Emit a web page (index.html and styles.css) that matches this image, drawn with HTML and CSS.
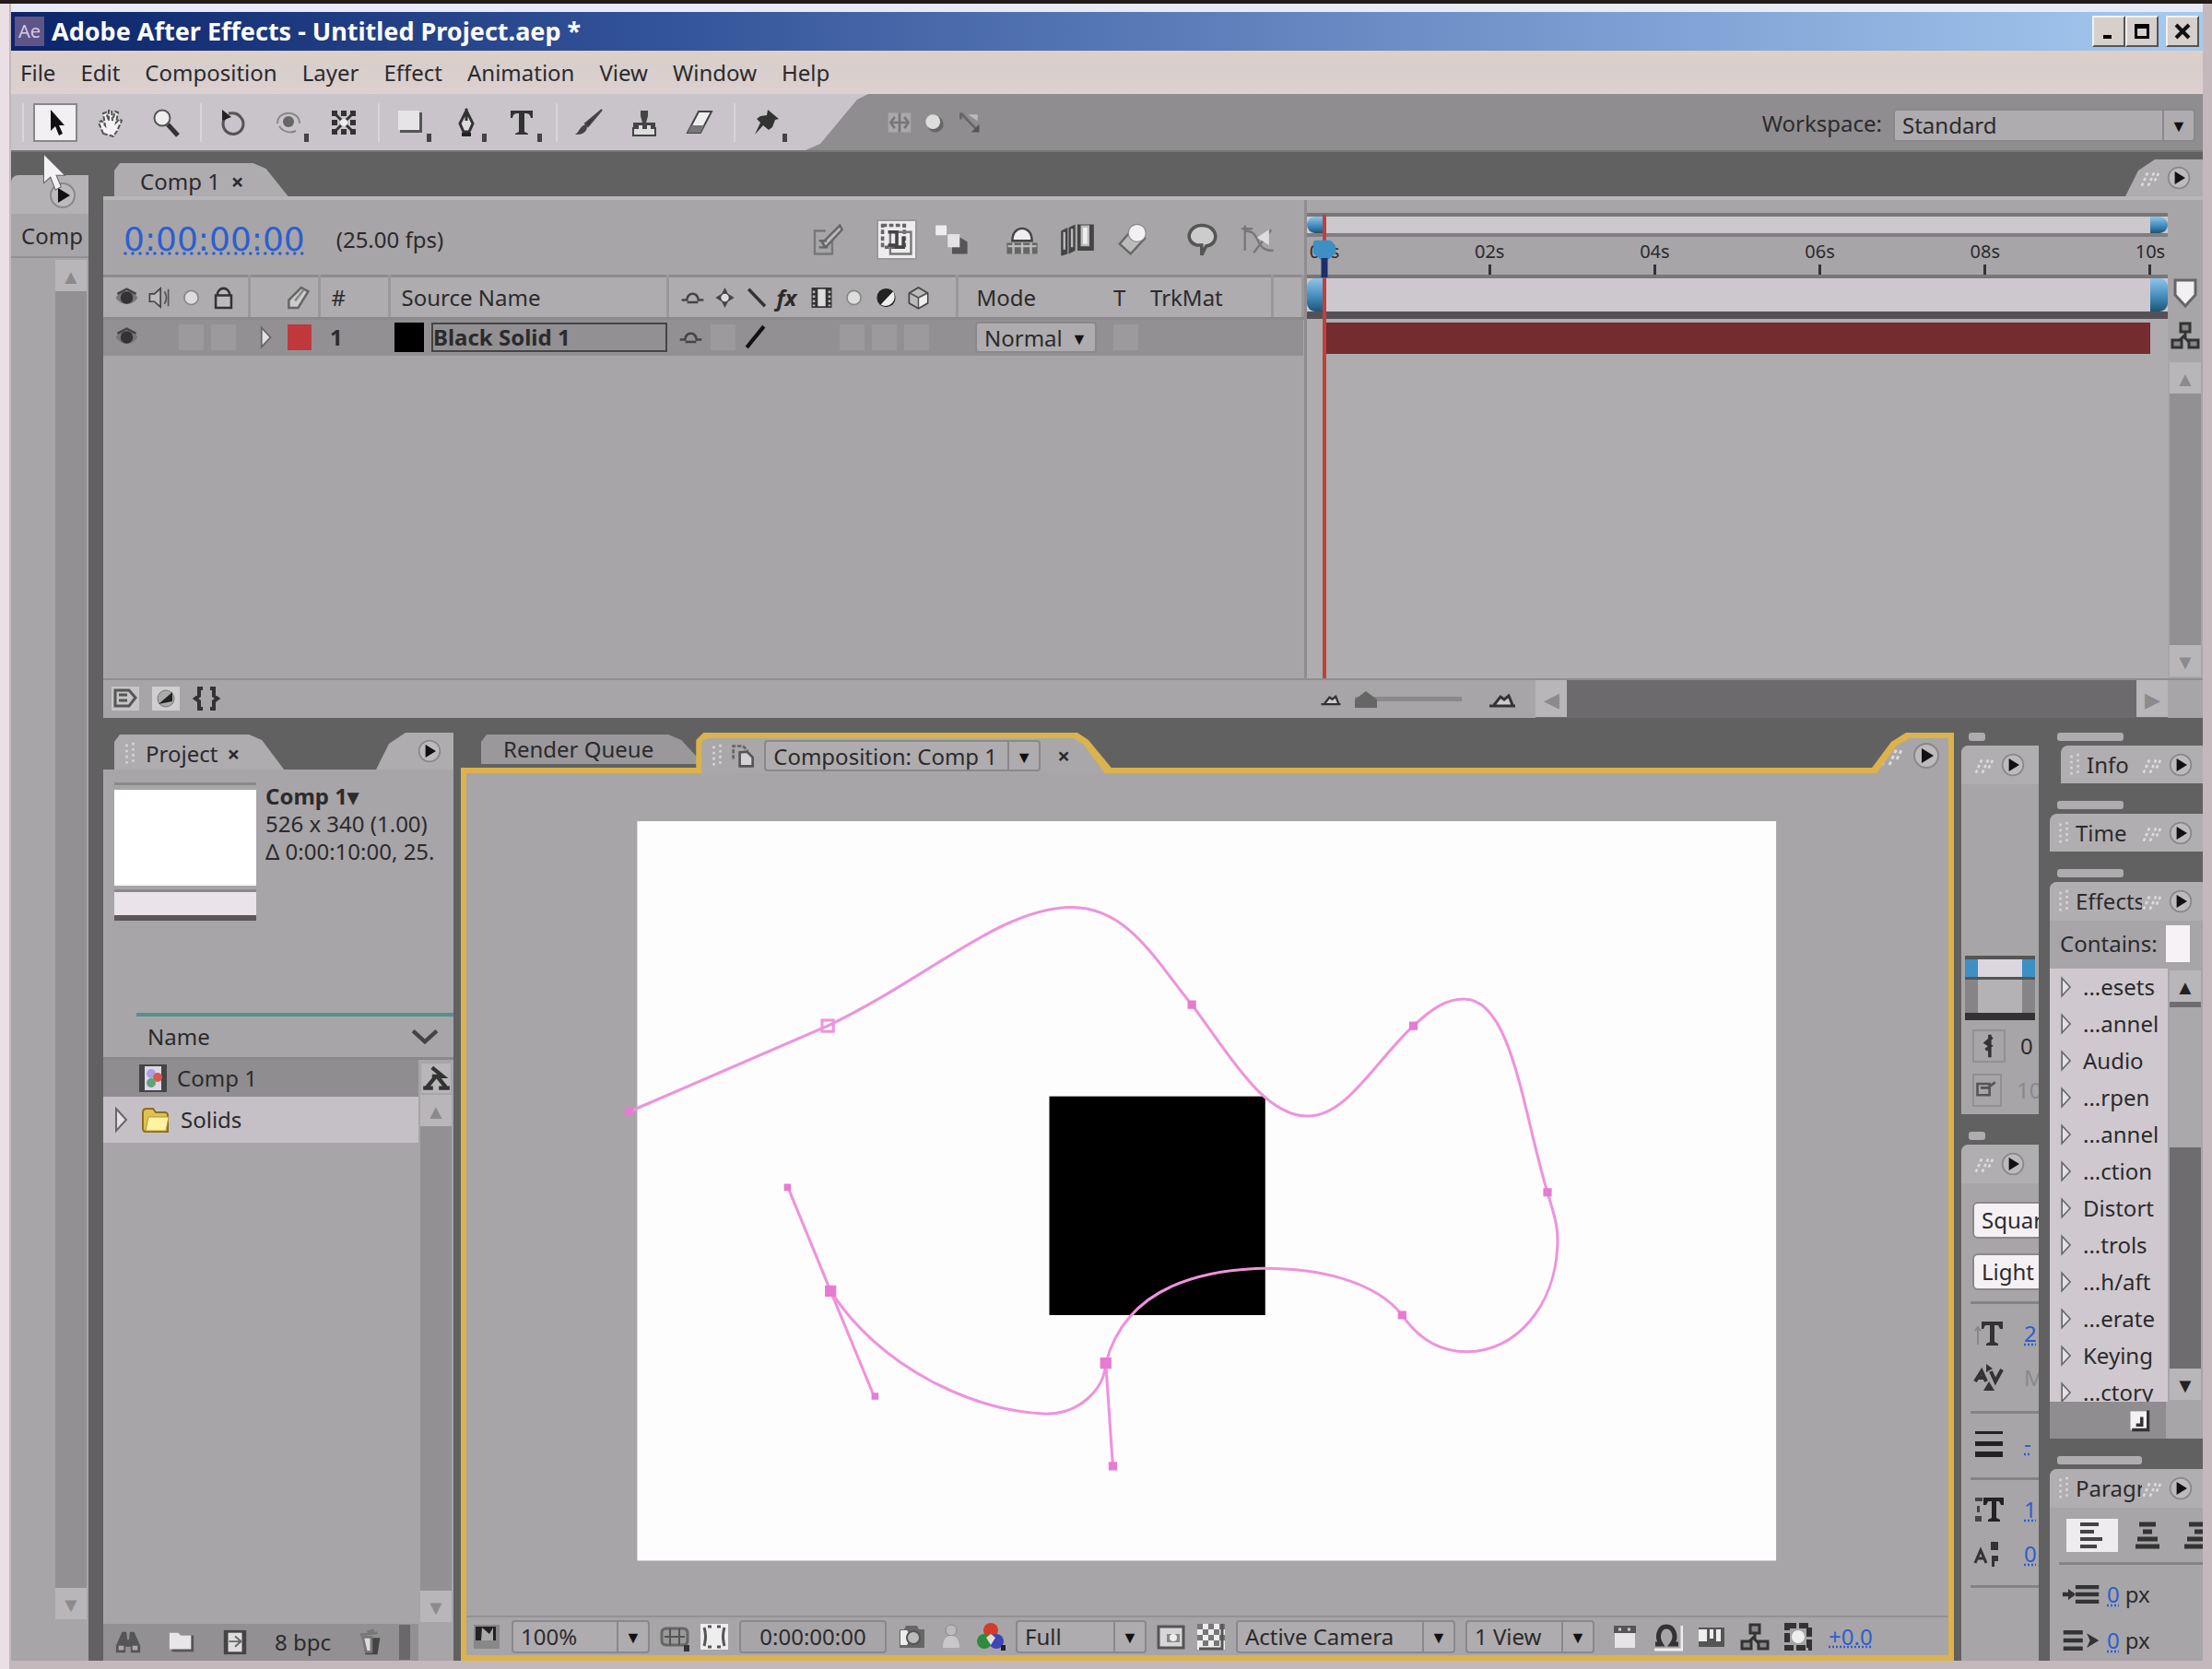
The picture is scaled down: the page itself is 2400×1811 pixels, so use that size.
FILE: index.html
```
<!DOCTYPE html>
<html lang="en">
<head>
  <meta charset="UTF-8">
  <meta name="viewport" content="width=device-width, initial-scale=1.0">
  <title>Adobe After Effects - Untitled Project.aep *</title>
  <link rel="stylesheet" href="styles.css">
</head>
<body>
  <!-- shared icons -->
  <svg class="sprite" aria-hidden="true">
    <symbol id="i-arrow" viewBox="0 0 32 32"><path d="M11 2v23l5-5 4 10 4-2-4-9h6z" fill="#111"/></symbol>
    <symbol id="i-hand" viewBox="0 0 32 32"><path d="M8 28 3 16l3-2 4 5L8 6l3-1 3 9V3h3l1 11 3-10 3 1-2 11 4-4 2 2-5 11-4 6z" fill="#f4f2f4" stroke="#555" stroke-width="2" stroke-dasharray="5 2"/></symbol>
    <symbol id="i-zoom" viewBox="0 0 32 32"><path d="m18 18 11 12" stroke="#333" stroke-width="5"/><circle cx="12" cy="11" r="8.500" fill="#eee" stroke="#555" stroke-width="2"/></symbol>
    <symbol id="i-rotate" viewBox="0 0 32 32"><path d="M8 10a11 11 0 1 0 16 0c-3-4-7-5-13-4" fill="none" stroke="#555" stroke-width="3"/><path d="M4 2v12l10-4z" fill="#222"/></symbol>
    <symbol id="i-orbit" viewBox="0 0 32 32"><circle cx="16" cy="15" r="6" fill="#666"/><path d="M4 17C4 2 28 2 28 17M6 20c4 6 12 8 18 5" fill="none" stroke="#888" stroke-width="2"/></symbol>
    <symbol id="i-pan" viewBox="0 0 32 32"><path d="M3 3h6v6H3zM13 3h6v6h-6zM23 3h6v6h-6zM3 13h6v6H3zM23 13h6v6h-6zM3 23h6v6H3zM13 23h6v6h-6zM23 23h6v6h-6z" fill="#333"/><path d="m6 6 20 20M26 6 6 26" stroke="#333" stroke-width="3"/><circle cx="16" cy="16" r="4" fill="#eee"/></symbol>
    <symbol id="i-rect" viewBox="0 0 32 32"><path d="M4 5h24v22H4z" fill="#555"/><path d="M2 3h23v21H2z" fill="#e6e4e6"/></symbol>
    <symbol id="i-pen" viewBox="0 0 32 32"><path d="M16 1v13M16 3l7 14-4 9h-6l-4-9z" fill="#ddd" stroke="#333" stroke-width="3"/><path d="M11 27h10v4H11z" fill="#222"/></symbol>
    <symbol id="i-type" viewBox="0 0 32 32"><path d="M4 3h24v8h-2c-1-4-2-5-7-5v20l4 2v1H9v-1l4-2V6c-5 0-6 1-7 5H4z" fill="#333"/></symbol>
    <symbol id="i-brush" viewBox="0 0 32 32"><path d="M30 2 15 20l-3-3z" fill="#333" stroke="#444" stroke-width="2"/><path d="M13 18c3 4-1 12-12 11 5-3 5-10 12-11z" fill="#444"/></symbol>
    <symbol id="i-stamp" viewBox="0 0 32 32"><path d="M12 3h8v6l-2 7h10v7H4v-7h10l-2-7z" fill="#444"/><path d="M4 22h24v8H4z" fill="#ddd" stroke="#444" stroke-width="2"/><path d="M10 19h4v5h-4zM19 19h4v5h-4z" fill="#ddd"/></symbol>
    <symbol id="i-eraser" viewBox="0 0 32 32"><path d="M15 4h14l-12 23H3z" fill="#eee" stroke="#444" stroke-width="2"/><path d="M7 19h14l-4 8H3z" fill="#777"/></symbol>
    <symbol id="i-pin" viewBox="0 0 32 32"><path d="m17 2 12 10-4 1-3 8-4 3-6-5-9 10 6-13-4-4 4-3 7-1z" fill="#333"/></symbol>
    <symbol id="i-axis" viewBox="0 0 32 32"><path d="M2 4h28v24H2z" fill="#aaa8aa"/><path d="M16 4v24M4 16h24M10 9l-5 7 5 7M22 9l5 7-5 7" fill="none" stroke="#777" stroke-width="3"/></symbol>
    <symbol id="i-ball" viewBox="0 0 32 32"><circle cx="17" cy="18" r="10" fill="#666"/><circle cx="14" cy="15" r="9" fill="#ddd"/></symbol>
    <symbol id="i-view" viewBox="0 0 32 32"><path d="M5 4v8M5 4l20 21" stroke="#666" stroke-width="3"/><path d="M14 6h12v8z" fill="#bbb"/><path d="M28 28V18L18 28z" fill="#555"/></symbol>
    <symbol id="i-eye" viewBox="0 0 32 32"><path d="M2 16C8 5 24 5 30 16 24 27 8 27 2 16z" fill="#777"/><circle cx="16" cy="16" r="8" fill="#333"/><path d="M4 11 16 5l12 6" fill="none" stroke="#444" stroke-width="3"/></symbol>
    <symbol id="i-sound" viewBox="0 0 32 32"><path d="M4 11h6l8-7v24l-8-7H4z" fill="#bbb" stroke="#444" stroke-width="2"/><path d="M23 8q5 8 0 16M28 5v22" fill="none" stroke="#555" stroke-width="2"/></symbol>
    <symbol id="i-dot" viewBox="0 0 32 32"><circle cx="16" cy="16" r="9" fill="#ddd" stroke="#888" stroke-width="2"/></symbol>
    <symbol id="i-lock" viewBox="0 0 32 32"><path d="M8 13C8 1 24 1 24 13M6 13h20v16H6z" fill="#bbb" stroke="#333" stroke-width="3"/></symbol>
    <symbol id="i-tag" viewBox="0 0 32 32"><path d="m20 3 9 5-13 21H4V19z" fill="#ccc" stroke="#666" stroke-width="3"/><path d="m12 20 11-14" stroke="#888" stroke-width="3"/></symbol>
    <symbol id="i-shy" viewBox="0 0 32 32"><path d="M2 19h8M22 19h8M9 18a7 7 0 0 1 14 0M9 22h14" fill="none" stroke="#444" stroke-width="3"/></symbol>
    <symbol id="i-sun" viewBox="0 0 32 32"><path d="m16 3 4 8 8 5-8 5-4 8-4-8-8-5 8-5z" fill="#444"/><circle cx="16" cy="16" r="5" fill="#ddd"/></symbol>
    <symbol id="i-back" viewBox="0 0 32 32"><path d="m5 5 21 22" stroke="#333" stroke-width="4"/></symbol>
    <symbol id="i-slash" viewBox="0 0 32 32"><path d="M27 2 5 29" stroke="#111" stroke-width="5"/></symbol>
    <symbol id="i-film" viewBox="0 0 32 32"><path d="M3 3h26v26H3z" fill="#333"/><path d="M11 5h10v22H11z" fill="#ddd"/><path d="M6 7v20M26 7v20" stroke="#bbb" stroke-width="3" stroke-dasharray="3 3"/></symbol>
    <symbol id="i-half" viewBox="0 0 32 32"><circle cx="16" cy="16" r="12" fill="#222"/><path d="M25 8A12 12 0 0 1 9 25z" fill="#eee"/></symbol>
    <symbol id="i-cube" viewBox="0 0 32 32"><path d="m16 3 12 7v13l-12 7-12-7V10z" fill="#bbb" stroke="#444" stroke-width="2"/><path d="m5 10 11 6 11-6M16 16v13" fill="none" stroke="#555" stroke-width="2"/><path d="m17 17 10-5v10l-10 6z" fill="#eee"/></symbol>
    <symbol id="i-draft" viewBox="0 0 32 32"><path d="M15 8H5v21h16V16" fill="none" stroke="#777" stroke-width="2"/><path d="M9 17h7M9 23h8M12 19 28 3l2 4-15 16z" fill="#bbb" stroke="#666" stroke-width="2"/></symbol>
    <symbol id="i-live" viewBox="0 0 32 32"><path d="M3 3h20v20H3z" fill="none" stroke="#666" stroke-width="3" stroke-dasharray="4 2"/><path d="M10 9h19v20H10z" fill="none" stroke="#777" stroke-width="2"/><path d="M8 9h8v12H8M22 13v10h-8" fill="none" stroke="#444" stroke-width="3"/></symbol>
    <symbol id="i-cubes" viewBox="0 0 32 32"><path d="M1 3h10v9H1z" fill="#eee"/><path d="m20 12 10 6v11H16V17z" fill="#555"/><path d="M12 11h11v12H12z" fill="#e4e2e4"/></symbol>
    <symbol id="i-shyhat" viewBox="0 0 32 32"><path d="M2 19h28v10H2z" fill="#666"/><path d="M7 17C7 2 25 2 25 17z" fill="#eee" stroke="#444" stroke-width="2"/><path d="M3 22h26M8 19v10M16 19v10M24 19v10" stroke="#bbb" stroke-width="2"/></symbol>
    <symbol id="i-frames" viewBox="0 0 32 32"><path d="M1 8l6-3v24l-6 2zM8 5l6-3v24l-6 3zM16 2h15v24H16z" fill="#444"/><path d="M20 4h6v17h-6zM4 9v16M11 6v17" fill="#eee" stroke="#bbb" stroke-width="2"/></symbol>
    <symbol id="i-blend" viewBox="0 0 32 32"><path d="m4 20 13-15 10 10-13 14z" fill="#bbb" stroke="#666" stroke-width="2"/><circle cx="20" cy="10" r="8" fill="#f2f0f2" stroke="#888"/></symbol>
    <symbol id="i-brain" viewBox="0 0 32 32"><path d="M10 21C-1 17 3 3 15 3c15 0 17 17 4 19l-4 8v-9z" fill="#ccc" stroke="#555" stroke-width="3"/></symbol>
    <symbol id="i-graph" viewBox="0 0 32 32"><path d="M4 3v23M1 6h10M4 8c16 0 7 18 26 18M28 7 12 28" fill="none" stroke="#777" stroke-width="2"/><path d="m15 14 11-7v14z" fill="#ddd"/></symbol>
    <symbol id="i-toggle" viewBox="0 0 32 32"><path d="M1 3h30v26H1z" fill="#c6c4c6"/><path d="M5 7h15l7 8-7 9H5zM9 12h9M9 18h9" fill="none" stroke="#555" stroke-width="3"/></symbol>
    <symbol id="i-modes" viewBox="0 0 32 32"><path d="M1 3h30v26H1z" fill="#d0ced0"/><circle cx="16" cy="16" r="9" fill="#aaa" stroke="#777"/><path d="m8 22 15-13v10z" fill="#222"/></symbol>
    <symbol id="i-braces" viewBox="0 0 32 32"><path d="M12 5H8v8l-4 3 4 3v8h4M20 5h4v8l4 3-4 3v8h-4" fill="none" stroke="#333" stroke-width="4"/></symbol>
    <symbol id="i-hill" viewBox="0 0 32 32"><path d="M2 24h28M7 23l7-9 4 3 5-4 4 10" fill="#ccc" stroke="#333" stroke-width="3"/></symbol>
    <symbol id="i-flow" viewBox="0 0 32 32"><path d="M16 13v5M6 25l8-8 8 8" stroke="#333" stroke-width="3" fill="none"/><path d="M11 3h10v9H11zM2 21h10v8H2zM20 21h10v8H20z" fill="#888" stroke="#333" stroke-width="3"/></symbol>
    <symbol id="i-flow-alt" viewBox="0 0 32 32"><path d="M1 1h30v30H1z" fill="#b8b6b8"/><path d="M12 14h11L12 5M16 14 6 26M18 15l8 10M3 26h10M19 26h11" stroke="#333" stroke-width="4" fill="none"/></symbol>
    <symbol id="i-folder" viewBox="0 0 32 32"><path d="M2 8q0-4 4-4h7l3 4h10q3 0 3 4v17H5q-3 0-3-4z" fill="#e0c050" stroke="#8a6f22" stroke-width="2"/><path d="M8 13h22l-3 15H5z" fill="#fff2a0" stroke="#b59535"/></symbol>
    <symbol id="i-comp" viewBox="0 0 32 32"><path d="M1 1h30v30H1z" fill="#444"/><path d="M7 3h18v26H7z" fill="#ddd8e8"/><circle cx="14" cy="11" r="5" fill="#a9a0e0"/><circle cx="21" cy="15" r="5" fill="#d8594e"/><circle cx="14" cy="21" r="5" fill="#5fa37b"/></symbol>
    <symbol id="i-find" viewBox="0 0 32 32"><path d="M9 4h5l1 9h2l1-9h5l7 16v8H19v-7h-6v7H2v-8z" fill="#555"/><path d="M5 20h6v5H5zM21 20h6v5h-6z" fill="#aaa"/></symbol>
    <symbol id="i-newfolder" viewBox="0 0 32 32"><path d="M5 8h25v19H5z" fill="#555"/><path d="M2 5h10l3 3h12v16H2z" fill="#e8e6e8"/></symbol>
    <symbol id="i-newcomp" viewBox="0 0 32 32"><path d="M3 2h26v28H3z" fill="#444"/><path d="M8 5h16v22H8z" fill="#ddd"/><path d="M9 15h14M16 9l7 6-7 6" fill="none" stroke="#666" stroke-width="2"/></symbol>
    <symbol id="i-trash" viewBox="0 0 32 32"><path d="M7 11h20l-3 19H10z" fill="#444"/><path d="M7 10h10v17h-6zM4 7l20-2M12 4l8-2" fill="#ddd" stroke="#777" stroke-width="3"/></symbol>
    <symbol id="i-display" viewBox="0 0 32 32"><path d="M2 3h28v26H2z" fill="#888"/><path d="M4 5h22v15H4z" fill="#222"/><path d="m11 6 8 7 4-7v14H10z" fill="#aaa"/></symbol>
    <symbol id="i-grid" viewBox="0 0 32 32"><path d="M2 12q0-5 5-5h18q5 0 5 5v8q0 5-5 5H7q-5 0-5-5z" fill="#999" stroke="#666" stroke-width="3"/><path d="M11 7v18M21 7v18M5 16h22" stroke="#555" stroke-width="2"/><path d="M26 25h6v7h-6z" fill="#333"/></symbol>
    <symbol id="i-mask" viewBox="0 0 32 32"><path d="M1 2h30v28H1z" fill="#eee"/><path d="M5 6q3 9 0 20M27 6q-3 9 0 20M9 5h4M19 5h4M9 27h4M19 27h4" fill="none" stroke="#555" stroke-width="3"/></symbol>
    <symbol id="i-camera" viewBox="0 0 32 32"><path d="M3 8h5l2-4h12l2 4h6v20H3z" fill="#666"/><path d="M4 9h7l5 7-5 9H4z" fill="#eee"/><circle cx="18" cy="17" r="7" fill="#bbb" stroke="#555" stroke-width="2"/></symbol>
    <symbol id="i-person" viewBox="0 0 32 32"><circle cx="16" cy="9" r="6" fill="#bbb" stroke="#888"/><path d="M7 28q0-13 9-13t9 13z" fill="#c9c7c9"/></symbol>
    <symbol id="i-rgb" viewBox="0 0 32 32"><circle cx="16" cy="9" r="8" fill="#d23c2c"/><circle cx="9" cy="21" r="8" fill="#2e8b3c"/><circle cx="22" cy="21" r="8" fill="#3e46b4"/><path d="m16 13 5 4-5 8-5-8z" fill="#ddd"/><path d="M27 25h5v6h-5z" fill="#222"/></symbol>
    <symbol id="i-region" viewBox="0 0 32 32"><path d="M2 5h27v23H2z" fill="#d8d6d8" stroke="#555" stroke-width="3"/><path d="M11 13h14v9H11z" fill="#888"/><circle cx="18" cy="17" r="4" fill="#eee"/></symbol>
    <symbol id="i-checker" viewBox="0 0 32 32"><path d="M1 2h30v28H1z" fill="#eee"/><path d="M1 2h6v6H1zM13 2h6v6h-6zM25 2h6v6h-6zM7 8h6v6H7zM19 8h6v6h-6zM1 14h6v6H1zM13 14h6v6h-6zM25 14h6v6h-6zM7 20h6v6H7zM19 20h6v6h-6z" fill="#777"/><path d="M28 2v27H3" fill="none" stroke="#555" stroke-width="3"/></symbol>
    <symbol id="i-box" viewBox="0 0 32 32"><path d="M4 4h24v8H4z" fill="#555"/><path d="M5 12h22v16H5z" fill="#e6e4e6"/><path d="M9 8h3M19 8h3" stroke="#ccc" stroke-width="3"/></symbol>
    <symbol id="i-fast" viewBox="0 0 32 32"><path d="M1 30h30V4" fill="none" stroke="#eee" stroke-width="3"/><path d="M2 24h6C3 16 6 5 14 5s12 11 6 19h7" fill="none" stroke="#333" stroke-width="5"/></symbol>
    <symbol id="i-line" viewBox="0 0 32 32"><path d="M2 6h28v21H2z" fill="#555"/><path d="M2 8h9v13H2zM14 8h4v10h-4zM21 8h5v13h-5z" fill="#eee"/></symbol>
    <symbol id="i-expo" viewBox="0 0 32 32"><path d="M4 4h24v24H4z" fill="none" stroke="#333" stroke-width="6" stroke-dasharray="10 3"/><circle cx="16" cy="16" r="7" fill="#eee"/></symbol>
    <symbol id="i-pages" viewBox="0 0 32 32"><path d="M3 20V4h12l6 6" fill="none" stroke="#666" stroke-width="3" stroke-dasharray="5 2"/><path d="M11 12v17h16V18l-7-7z" fill="#d4d2d4" stroke="#555" stroke-width="3"/></symbol>
    <symbol id="i-tsize" viewBox="0 0 32 32"><path d="M8 3h23v8h-3l-2-4h-4v18l4 2v2H13v-2l4-2V7h-5l-2 4H8z" fill="#333"/><path d="M4 10v18M1 13l3-4 3 4" fill="none" stroke="#888" stroke-width="2"/></symbol>
    <symbol id="i-kern" viewBox="0 0 32 32"><path d="M1 20 8 9l5 11M4 16h7M18 9l5 11 7-13" fill="none" stroke="#333" stroke-width="4"/><path d="m13 1 7 5-7 4zM16 20l6 10H10z" fill="#333"/></symbol>
    <symbol id="i-leading" viewBox="0 0 32 32"><path d="M1 3h30v3H1zM1 14h30v5H1zM1 25h30v6H1z" fill="#222"/></symbol>
    <symbol id="i-vscale" viewBox="0 0 32 32"><path d="M10 3h22v8h-3l-2-4h-3v18l4 2v2H15v-2l4-2V7h-4l-2 4h-3z" fill="#222"/><path d="M1 3h8v4H1zM1 23h7v6H1zM3 12h3v7H3z" fill="#444"/></symbol>
    <symbol id="i-base" viewBox="0 0 32 32"><path d="m1 26 6-14 6 14M3 21h8" fill="none" stroke="#333" stroke-width="3"/><path d="M18 3h8v9h-8zM19 18h7v6h-4v6h-3z" fill="#333"/></symbol>
    <symbol id="i-key" viewBox="0 0 32 32"><path d="M17 2v28M20 5l-8 7 6 4-6 5" fill="none" stroke="#333" stroke-width="4"/></symbol>
    <symbol id="i-stroke" viewBox="0 0 32 32"><path d="M4 8h15v14H4zM8 13h9l9-7" fill="none" stroke="#555" stroke-width="3"/></symbol>
    <symbol id="i-al" viewBox="0 0 32 32"><path d="M3 4h20M3 12h15M3 20h24M3 28h18" stroke="#444" stroke-width="4"/></symbol>
    <symbol id="i-ac" viewBox="0 0 32 32"><path d="M7 4h18M11 12h10M5 20h22M3 28h26" stroke="#333" stroke-width="5"/></symbol>
    <symbol id="i-ar" viewBox="0 0 32 32"><path d="M9 4h20M15 12h14M7 20h22M4 28h25" stroke="#333" stroke-width="5"/></symbol>
    <symbol id="i-indl" viewBox="0 0 48 32"><path d="M1 16h14M17 7h29M17 16h29M17 25h29" stroke="#333" stroke-width="5"/><path d="m8 9 9 7-9 7z" fill="#333"/></symbol>
    <symbol id="i-indr" viewBox="0 0 48 32"><path d="M2 6h24M2 16h24M2 26h24" stroke="#333" stroke-width="5"/><path d="m31 7 15 9-15 9 4-9z" fill="#333"/></symbol>
    <symbol id="i-new" viewBox="0 0 32 32"><path d="M4 5h24v23H4z" fill="#f4f2f4"/><path d="M26 4v24H6M18 12v10h-7" fill="none" stroke="#333" stroke-width="4"/></symbol>
    <symbol id="i-marker" viewBox="0 0 32 32"><path d="M5 2h22v16L16 30 5 18z" fill="#f2f0f2" stroke="#666" stroke-width="3"/></symbol>
    <symbol id="i-twirl" viewBox="0 0 16 32"><path d="m2 4 11 12L2 28z" fill="#e2e0e2" stroke="#666" stroke-width="2"/></symbol>
    <symbol id="i-menu" viewBox="0 0 32 32"><circle cx="16" cy="16" r="13" fill="#bcbabc" stroke="#8a888a" stroke-width="2"/><path d="m11 8 13 8-13 8z" fill="#111"/></symbol>
    <symbol id="i-grip" viewBox="0 0 32 32"><path d="m2 26 8-18M10 26l8-18M18 20l6-12" stroke="#dcdadc" stroke-width="3" stroke-dasharray="4 3"/></symbol>
    <symbol id="i-dots" viewBox="0 0 16 32"><path d="M4 4v26M12 2v26" stroke="#d6d4d6" stroke-width="3" stroke-dasharray="3 4"/></symbol>
  </svg>

  <div class="window">
    <header class="title-bar">
      <span class="app-icon">Ae</span>
      <h1>Adobe After Effects - Untitled Project.aep *</h1>
      <div class="window-buttons">
        <button aria-label="Minimize"><svg viewBox="0 0 20 20"><path d="M4 14h9v4H4z"/></svg></button>
        <button aria-label="Maximize"><svg viewBox="0 0 20 20"><path d="M2 2h16v16H2zM5 7v8h10V7z" fill-rule="evenodd"/></svg></button>
        <button aria-label="Close" class="close"><svg viewBox="0 0 20 20"><path d="m3 3 14 14M17 3 3 17" stroke="#111" stroke-width="4"/></svg></button>
      </div>
    </header>

    <nav class="menu-bar">
      <button>File</button><button>Edit</button><button>Composition</button><button>Layer</button><button>Effect</button><button>Animation</button><button>View</button><button>Window</button><button>Help</button>
    </nav>

    <div class="toolbar">
      <div class="tools">
        <div class="tool-group">
          <button class="tool selected" aria-label="Selection"><svg><use href="#i-arrow"/></svg></button>
          <button class="tool" aria-label="Hand"><svg><use href="#i-hand"/></svg></button>
          <button class="tool" aria-label="Zoom"><svg><use href="#i-zoom"/></svg></button>
        </div>
        <div class="tool-group">
          <button class="tool" aria-label="Rotation"><svg><use href="#i-rotate"/></svg></button>
          <button class="tool more" aria-label="Orbit camera"><svg><use href="#i-orbit"/></svg></button>
          <button class="tool" aria-label="Pan behind"><svg><use href="#i-pan"/></svg></button>
        </div>
        <div class="tool-group">
          <button class="tool more" aria-label="Rectangle mask"><svg><use href="#i-rect"/></svg></button>
          <button class="tool more" aria-label="Pen"><svg><use href="#i-pen"/></svg></button>
          <button class="tool more" aria-label="Type"><svg><use href="#i-type"/></svg></button>
        </div>
        <div class="tool-group">
          <button class="tool" aria-label="Brush"><svg><use href="#i-brush"/></svg></button>
          <button class="tool" aria-label="Clone stamp"><svg><use href="#i-stamp"/></svg></button>
          <button class="tool" aria-label="Eraser"><svg><use href="#i-eraser"/></svg></button>
        </div>
        <div class="tool-group">
          <button class="tool more" aria-label="Puppet pin"><svg><use href="#i-pin"/></svg></button>
        </div>
      </div>
      <div class="axis-modes">
        <button aria-label="Local axis"><svg><use href="#i-axis"/></svg></button>
        <button aria-label="World axis"><svg><use href="#i-ball"/></svg></button>
        <button aria-label="View axis"><svg><use href="#i-view"/></svg></button>
      </div>
      <div class="workspace-pick">
        <label for="workspace">Workspace:</label>
        <div class="dropdown workspace-select"><select id="workspace"><option>Standard</option></select><span class="caret">▼</span></div>
      </div>
    </div>

    <main class="workspace">
      <aside class="side-strip">
        <div class="strip-tab"><svg><use href="#i-menu"/></svg></div>
        <div class="strip-body">
          <div class="strip-name">Comp</div>
          <div class="scroll"><button class="off" aria-label="Up">▲</button><i></i><button class="off" aria-label="Down">▼</button></div>
        </div>
      </aside>

      <section class="panel timeline">
        <div class="tab-row">
          <button class="tab tab-comp">Comp 1 <b>×</b></button>
          <div class="corner corner-wide"><svg><use href="#i-grip"/></svg><svg><use href="#i-menu"/></svg></div>
        </div>
        <div class="timeline-body">
          <div class="layers">
            <div class="layer-tools">
              <a class="timecode" href="#time">0:00:00:00</a>
              <span>(25.00 fps)</span>
              <div class="layer-buttons">
                <div><button aria-label="Draft"><svg><use href="#i-draft"/></svg></button></div>
                <div><button class="lit" aria-label="Live update"><svg><use href="#i-live"/></svg></button><button aria-label="Draft 3D"><svg><use href="#i-cubes"/></svg></button></div>
                <div><button aria-label="Hide shy layers"><svg><use href="#i-shyhat"/></svg></button><button aria-label="Frame blending"><svg><use href="#i-frames"/></svg></button><button aria-label="Motion blur"><svg><use href="#i-blend"/></svg></button></div>
                <div><button aria-label="Brainstorm"><svg><use href="#i-brain"/></svg></button><button aria-label="Graph editor"><svg><use href="#i-graph"/></svg></button></div>
              </div>
            </div>
            <table class="layer-table">
              <colgroup><col class="c-av"><col class="c-label"><col class="c-num"><col class="c-name"><col class="c-switches"><col class="c-mode"><col class="c-t"><col class="c-trk"><col></colgroup>
              <thead>
                <tr>
                  <th><span class="icons"><svg><use href="#i-eye"/></svg><svg><use href="#i-sound"/></svg><svg><use href="#i-dot"/></svg><svg><use href="#i-lock"/></svg></span></th>
                  <th><span class="icons end"><svg><use href="#i-tag"/></svg></span></th>
                  <th>#</th>
                  <th>Source Name</th>
                  <th><span class="icons"><svg><use href="#i-shy"/></svg><svg><use href="#i-sun"/></svg><svg><use href="#i-back"/></svg><em>fx</em><svg><use href="#i-film"/></svg><svg><use href="#i-dot"/></svg><svg><use href="#i-half"/></svg><svg><use href="#i-cube"/></svg></span></th>
                  <th class="mode">Mode</th>
                  <th>T</th>
                  <th>TrkMat</th>
                  <th></th>
                </tr>
              </thead>
              <tbody>
                <tr>
                  <td><span class="icons"><svg><use href="#i-eye"/></svg><i class="none"></i><i></i><i></i></span></td>
                  <td><span class="icons end"><svg class="twirl"><use href="#i-twirl"/></svg><i class="swatch"></i></span></td>
                  <td><b>1</b></td>
                  <td><span class="layer-name"><i></i><b>Black Solid 1</b></span></td>
                  <td><span class="icons"><svg><use href="#i-shy"/></svg><i></i><svg><use href="#i-slash"/></svg><i class="none"></i><i class="none"></i><i></i><i></i><i></i></span></td>
                  <td><div class="dropdown mode-select"><select aria-label="Mode"><option>Normal</option></select><span class="caret">▼</span></div></td>
                  <td><span class="icons"><i></i></span></td>
                  <td></td>
                  <td></td>
                </tr>
              </tbody>
            </table>
          </div>
          <div class="time">
            <div class="range navigator"><i></i><i></i></div>
            <div class="ruler">
              <span>00s</span><span>02s</span><span>04s</span><span>06s</span><span>08s</span><span>10s</span>
            </div>
            <div class="range work-area"><i></i><i></i></div>
            <div class="tracks"><div class="layer-bar"></div></div>
            <div class="playhead"><svg viewBox="0 0 36 48"><path d="M6 2h20l6 7v9L18 30 4 18V5z" fill="#3f8fc4"/><path d="M18 24v24" stroke="#1c2f6b" stroke-width="8"/></svg></div>
          </div>
          <div class="time-side">
            <svg><use href="#i-marker"/></svg>
            <svg><use href="#i-flow"/></svg>
            <div class="scroll"><button class="off" aria-label="Up">▲</button><i></i><button class="off" aria-label="Down">▼</button></div>
          </div>
        </div>
        <div class="timeline-foot">
          <div class="foot-left">
            <button aria-label="Switches"><svg><use href="#i-toggle"/></svg></button><button aria-label="Modes"><svg><use href="#i-modes"/></svg></button><button aria-label="In and out"><svg><use href="#i-braces"/></svg></button>
          </div>
          <div class="foot-right">
            <svg><use href="#i-hill"/></svg>
            <input type="range" aria-label="Time zoom" min="0" max="100" value="0">
            <svg class="big"><use href="#i-hill"/></svg>
            <div class="hscroll"><button aria-label="Left">◀</button><i></i><button aria-label="Right">▶</button></div>
          </div>
        </div>
      </section>

      <div class="lower">
        <section class="panel project">
          <div class="tab-row">
            <button class="tab"><svg class="dots"><use href="#i-dots"/></svg>Project <b>×</b></button>
            <div class="corner"><svg><use href="#i-menu"/></svg></div>
          </div>
          <div class="project-body">
            <div class="project-info">
              <div class="thumb"><i></i><i></i></div>
              <div class="info-text"><b>Comp 1▾</b><span>526 x 340 (1.00)</span><span>Δ 0:00:10:00, 25.</span></div>
            </div>
            <div class="name-head"><span>Name</span><svg viewBox="0 0 28 16"><path d="m2 2 12 11L26 2" fill="none" stroke="#444" stroke-width="4"/></svg></div>
            <div class="project-list">
              <ul>
                <li class="dim"><svg><use href="#i-comp"/></svg>Comp 1</li>
                <li class="picked"><svg class="twirl"><use href="#i-twirl"/></svg><svg><use href="#i-folder"/></svg>Solids</li>
              </ul>
              <div class="scroll"><svg><use href="#i-flow-alt"/></svg><button class="off" aria-label="Up">▲</button><i></i><button class="off" aria-label="Down">▼</button></div>
            </div>
            <div class="project-foot">
              <button aria-label="Find"><svg><use href="#i-find"/></svg></button>
              <button aria-label="New folder"><svg><use href="#i-newfolder"/></svg></button>
              <button aria-label="New composition"><svg><use href="#i-newcomp"/></svg></button>
              <button>8 bpc</button>
              <button aria-label="Delete"><svg><use href="#i-trash"/></svg></button>
              <i></i>
            </div>
          </div>
        </section>

        <section class="panel viewer">
          <div class="tab-row">
            <button class="tab tab-queue">Render Queue</button>
            <div class="tab-active">
              <div class="tab-inner">
                <svg class="dots"><use href="#i-dots"/></svg>
                <svg class="pages"><use href="#i-pages"/></svg>
                <div class="dropdown"><select aria-label="Composition"><option>Composition: Comp 1</option></select><span class="caret">▼</span></div>
                <b>×</b>
              </div>
            </div>
            <div class="corner-active"><div><svg><use href="#i-grip"/></svg><svg><use href="#i-menu"/></svg></div></div>
          </div>
          <div class="viewer-body">
            <!-- composition canvas with the mask path -->
            <svg class="stage" viewBox="331 548 1050 597">
              <rect x="452" y="582" width="807" height="524" fill="#fefdfe"/>
              <rect x="744" y="777" width="153" height="155" fill="#000"/>
              <g fill="none" stroke="#ee93dc" stroke-width="2">
                <path d="M446 788 587 727C660 692 710 643 760 643C800 643 820 682 845 712C870 745 895 791 927 791C955 791 975 752 1002 727C1015 715 1025 708 1038 708C1072 708 1080 790 1097 845C1102 862 1105 870 1104 884C1102 925 1075 958 1040 958C1020 958 1005 948 994 932C975 908 935 898 890 899C830 902 795 925 784 966C783 985 765 1002 742 1002C690 1000 625 970 589 915"/>
                <path d="M559 842 589 915 620 990M784 966 789 1039"/>
                <rect x="583" y="723" width="8" height="8"/>
              </g>
              <path d="M842 709h6v6h-6zM999 724h6v6h-6zM1094 842h6v6h-6zM991 929h6v6h-6zM780 962h8v8h-8zM585 911h8v8h-8zM556 839h5v5h-5zM618 987h5v5h-5zM786 1036h6v6h-6zM443 785h6v6h-6z" fill="#e67bd2"/>
            </svg>
            <div class="viewer-foot">
              <button aria-label="Always preview"><svg><use href="#i-display"/></svg></button>
              <div class="dropdown w-zoom"><select aria-label="Magnification"><option>100%</option></select><span class="caret">▼</span></div>
              <button aria-label="Guides"><svg><use href="#i-grid"/></svg></button>
              <button aria-label="Masks"><svg><use href="#i-mask"/></svg></button>
              <button class="time-box">0:00:00:00</button>
              <button aria-label="Snapshot"><svg><use href="#i-camera"/></svg></button>
              <button aria-label="Show snapshot"><svg><use href="#i-person"/></svg></button>
              <button aria-label="Channels"><svg><use href="#i-rgb"/></svg></button>
              <div class="dropdown w-res"><select aria-label="Resolution"><option>Full</option></select><span class="caret">▼</span></div>
              <button aria-label="Region"><svg><use href="#i-region"/></svg></button>
              <button aria-label="Transparency grid"><svg><use href="#i-checker"/></svg></button>
              <div class="dropdown w-cam"><select aria-label="Camera"><option>Active Camera</option></select><span class="caret">▼</span></div>
              <div class="dropdown w-view"><select aria-label="Views"><option>1 View</option></select><span class="caret">▼</span></div>
              <div class="foot-icons">
                <button aria-label="Pixel aspect"><svg><use href="#i-box"/></svg></button>
                <button aria-label="Fast previews"><svg><use href="#i-fast"/></svg></button>
                <button aria-label="Timeline"><svg><use href="#i-line"/></svg></button>
                <button aria-label="Flowchart"><svg><use href="#i-flow"/></svg></button>
                <button aria-label="Reset exposure"><svg><use href="#i-expo"/></svg></button>
              </div>
              <a href="#exposure">+0.0</a>
            </div>
          </div>
        </section>

        <div class="dock dock-narrow">
          <i class="pill tiny"></i>
          <section class="dock-panel controls">
            <div class="dock-tab"><svg><use href="#i-grip"/></svg><svg><use href="#i-menu"/></svg></div>
            <div class="mini-range"></div>
            <div class="mini-track"></div>
            <div class="mini-row"><button aria-label="Motion"><svg><use href="#i-key"/></svg></button><span>0</span></div>
            <div class="mini-row"><button aria-label="Stroke"><svg><use href="#i-stroke"/></svg></button><span class="faint">10</span></div>
          </section>
          <i class="pill tiny"></i>
          <section class="dock-panel character">
            <div class="dock-tab"><svg><use href="#i-grip"/></svg><svg><use href="#i-menu"/></svg></div>
            <input type="text" aria-label="Font family" value="Square">
            <input type="text" aria-label="Font style" value="Light">
            <div class="char-group"><div><svg><use href="#i-tsize"/></svg><a href="#size">2</a></div><div><svg><use href="#i-kern"/></svg><span class="faint">M</span></div></div>
            <div class="char-group one"><div><svg><use href="#i-leading"/></svg><a href="#leading">-</a></div></div>
            <div class="char-group"><div><svg><use href="#i-vscale"/></svg><a href="#scale">1</a></div><div><svg><use href="#i-base"/></svg><a href="#baseline">0</a></div></div>
            <hr>
          </section>
        </div>

        <div class="dock dock-wide">
          <i class="pill"></i>
          <section class="dock-panel closed inset"><div class="dock-tab"><svg class="dots"><use href="#i-dots"/></svg><span>Info</span><svg><use href="#i-grip"/></svg><svg><use href="#i-menu"/></svg></div></section>
          <i class="pill"></i>
          <section class="dock-panel closed"><div class="dock-tab"><svg class="dots"><use href="#i-dots"/></svg><span>Time</span><svg><use href="#i-grip"/></svg><svg><use href="#i-menu"/></svg></div></section>
          <i class="pill"></i>
          <section class="dock-panel effects">
            <div class="dock-tab"><svg class="dots"><use href="#i-dots"/></svg><span>Effects</span><svg><use href="#i-grip"/></svg><svg><use href="#i-menu"/></svg></div>
            <div class="contains"><label for="contains">Contains:</label><input id="contains" type="text"></div>
            <div class="effects-list">
              <ul>
                <li><svg><use href="#i-twirl"/></svg>...esets</li>
                <li><svg><use href="#i-twirl"/></svg>...annel</li>
                <li><svg><use href="#i-twirl"/></svg>Audio</li>
                <li><svg><use href="#i-twirl"/></svg>...rpen</li>
                <li><svg><use href="#i-twirl"/></svg>...annel</li>
                <li><svg><use href="#i-twirl"/></svg>...ction</li>
                <li><svg><use href="#i-twirl"/></svg>Distort</li>
                <li><svg><use href="#i-twirl"/></svg>...trols</li>
                <li><svg><use href="#i-twirl"/></svg>...h/aft</li>
                <li><svg><use href="#i-twirl"/></svg>...erate</li>
                <li><svg><use href="#i-twirl"/></svg>Keying</li>
                <li><svg><use href="#i-twirl"/></svg>...ctory</li>
              </ul>
              <div class="scroll dark"><button aria-label="Up">▲</button><i><b></b></i><button aria-label="Down">▼</button></div>
            </div>
            <div class="effects-foot"><button aria-label="New preset"><svg><use href="#i-new"/></svg></button></div>
          </section>
          <i class="pill long"></i>
          <section class="dock-panel paragraph">
            <div class="dock-tab"><svg class="dots"><use href="#i-dots"/></svg><span>Paragraph</span><svg><use href="#i-grip"/></svg><svg><use href="#i-menu"/></svg></div>
            <div class="aligns">
              <button class="lit" aria-label="Align left"><svg><use href="#i-al"/></svg></button>
              <button aria-label="Align center"><svg><use href="#i-ac"/></svg></button>
              <button aria-label="Align right"><svg><use href="#i-ar"/></svg></button>
            </div>
            <div class="indent"><svg><use href="#i-indl"/></svg><a href="#left">0</a> px</div>
            <div class="indent"><svg><use href="#i-indr"/></svg><a href="#right">0</a> px</div>
          </section>
        </div>
      </div>
    </main>
  </div>
  <svg class="cursor" viewBox="0 0 24 40"><path d="M1 1v30l7-6 5 13 6-3-5-12h9z" fill="#f4f2f4" stroke="#666" stroke-width="1"/></svg>
</body>
</html>
```
FILE: styles.css
```
* {
  box-sizing: border-box;
}

body {
  margin: 0;
  height: 100vh;
  overflow: hidden;
  background: #c4b8bc;
  color: #2c2a2c;
  font-family: "Noto Sans", "Open Sans", sans-serif;
  font-size: 24px;
  line-height: 32px;
}

button, input, select {
  margin: 0;
  padding: 0;
  border: none;
  background: none;
  color: inherit;
  font: inherit;
}

button {
  display: flex;
  align-items: center;
  justify-content: center;
}

ul {
  margin: 0;
  padding: 0;
  list-style: none;
}

a {
  color: #2b5fd0;
  text-decoration: underline dotted;
}

svg {
  display: block;
  flex: none;
  width: 32px;
  height: 32px;
}

.sprite {
  position: absolute;
  width: 0;
  height: 0;
}

.window {
  display: flex;
  flex-direction: column;
  height: 100vh;
  padding: 0 10px 9px 12px;
  border-top: 4px solid #241a1a;
  background: linear-gradient(to right, #eadfe4 10px, #c4b8bc 10px);
}

/* title bar */
.title-bar {
  display: flex;
  align-items: center;
  height: 51px;
  border-top: 9px solid #e8eaf8;
  padding: 0 4px;
  background: linear-gradient(to right, #0b246a, #34549a 30%, #6f90c8 65%, #a6caf0);
}

.app-icon {
  width: 32px;
  height: 32px;
  background: #5e5488;
  color: #d8c8e4;
  font-size: 20px;
  line-height: 32px;
  text-align: center;
}

.title-bar h1 {
  flex: 1;
  margin: 0;
  padding-left: 8px;
  color: #fff;
  font-size: 27px;
  line-height: 32px;
}

.window-buttons {
  display: flex;
}

.window-buttons button {
  width: 36px;
  height: 34px;
  border: 2px solid #f4f0ee;
  border-right-color: #555;
  border-bottom-color: #555;
  background: #d6cfcc;
}

.window-buttons .close {
  margin-left: 8px;
}

.window-buttons svg {
  width: 20px;
  height: 20px;
}

.menu-bar {
  display: flex;
  gap: 27px;
  height: 47px;
  padding-left: 10px;
  background: linear-gradient(#e0cfc6, #d8cfcd 30%, #dcd0d0);
}

/* toolbar */
.toolbar {
  display: flex;
  align-items: center;
  height: 63px;
  padding-right: 8px;
  border-bottom: 2px solid #777;
  background: #8f8d90;
}

.tools {
  display: flex;
  align-items: center;
  height: 61px;
  padding: 0 73px 0 12px;
  background: #c9c4c9;
  clip-path: polygon(0 0, 100% 0, calc(100% - 12px) 6px, calc(100% - 52px) 54px, calc(100% - 68px) 100%, 0 100%);
}

.tool-group {
  display: flex;
  gap: 12px;
  padding: 0 13px 0 10px;
  border-left: 2px solid #d8d4d8;
}

.tool {
  position: relative;
  width: 48px;
  height: 42px;
}

.tool.selected {
  border: 2px solid #888;
  background: #f2f0f2;
}

.tool.more::after {
  content: "";
  position: absolute;
  right: 2px;
  bottom: 0;
  width: 5px;
  height: 9px;
  background: #444;
}

.axis-modes {
  display: flex;
  gap: 10px;
  flex: 1;
  padding-left: 20px;
}

.axis-modes svg {
  width: 28px;
  height: 28px;
}

.workspace-pick {
  display: flex;
  gap: 12px;
  padding-top: 6px;
}

.dropdown {
  display: flex;
  height: 36px;
  border: 2px solid #8a888a;
  border-radius: 4px;
  background: #aeacae;
}

.dropdown select {
  flex: 1;
  min-width: 0;
  padding-left: 8px;
  appearance: none;
}

.caret {
  width: 34px;
  border-left: 2px solid #8a888a;
  color: #111;
  font-size: 18px;
  text-align: center;
}

.workspace-select {
  width: 328px;
}

/* panels */
.workspace {
  flex: 1;
  display: grid;
  grid-template-columns: 84px minmax(0, 1fr);
  grid-template-rows: minmax(0, 3fr) minmax(0, 5fr);
  column-gap: 16px;
  min-height: 0;
  background: #616161;
}

.side-strip {
  grid-row: 1 / 3;
  display: flex;
  flex-direction: column;
  padding-top: 25px;
  min-height: 0;
}

.strip-tab {
  display: flex;
  justify-content: flex-end;
  height: 42px;
  padding: 6px 12px 0 0;
  border-radius: 8px 0 0 0;
  background: #b4b2b4;
}

.strip-body {
  flex: 1;
  display: flex;
  flex-direction: column;
  align-items: flex-end;
  background: #a7a5a8;
}

.strip-name {
  width: 100%;
  height: 48px;
  padding: 8px 0 0 11px;
  border-bottom: 2px solid #929092;
}

.strip-body .scroll {
  flex: 1;
  margin-bottom: 43px;
}

.scroll {
  flex: none;
  display: flex;
  flex-direction: column;
  width: 38px;
  padding: 2px;
}

.scroll button,
.hscroll button {
  width: 34px;
  height: 34px;
  background: #b8b6b8;
  color: #222;
  font-size: 22px;
  line-height: 34px;
}

.scroll .off,
.hscroll button {
  color: #8c8a8c;
}

.scroll i {
  flex: 1;
  background: #929093;
}

.panel {
  display: flex;
  flex-direction: column;
  min-width: 0;
  min-height: 0;
}

.tab-row {
  display: flex;
  align-items: flex-end;
}

.tab {
  gap: 12px;
  height: 38px;
  padding: 4px 52px 0 28px;
  background: #aeacaf;
  clip-path: polygon(0 8px, 6px 0, calc(100% - 42px) 0, calc(100% - 28px) 6px, calc(100% - 4px) 100%, 0 100%);
}

.dots {
  width: 14px;
  height: 28px;
}

.corner {
  display: flex;
  justify-content: flex-end;
  align-items: center;
  width: 84px;
  height: 40px;
  margin-left: auto;
  padding-right: 12px;
  background: #aeacaf;
  clip-path: polygon(0 100%, 14px 12px, 32px 0, 100% 0, 100% 100%);
}

.corner svg {
  width: 28px;
  height: 28px;
}

/* timeline */
.timeline .tab-row {
  height: 48px;
}

.tab-comp {
  height: 36px;
  margin-left: 12px;
}

.timeline-body {
  flex: 1;
  display: flex;
  min-height: 0;
  border-top: 4px solid #b8b6b8;
  background: #a7a5a8;
}

.layers {
  flex: none;
  width: 1306px;
  border-right: 3px solid #8f8d90;
}

.layer-tools {
  display: flex;
  align-items: center;
  gap: 34px;
  height: 81px;
  padding: 4px 28px 0 22px;
}

.timecode {
  font-family: "DejaVu Sans", sans-serif;
  font-size: 36px;
  line-height: 40px;
}

.layer-buttons {
  display: flex;
  gap: 32px;
  margin-left: auto;
}

.layer-buttons div {
  display: flex;
  gap: 16px;
}

.layer-buttons button {
  width: 44px;
  height: 44px;
}

.layer-buttons svg {
  width: 38px;
  height: 38px;
}

.layer-buttons .lit {
  border: 2px solid #999;
  background: #eeecee;
}

.layer-table {
  width: 100%;
  table-layout: fixed;
  border-collapse: collapse;
}

.layer-table th,
.layer-table td {
  height: 40px;
  padding: 0 0 0 12px;
  font-weight: normal;
  text-align: left;
  white-space: nowrap;
}

.layer-table th {
  height: 46px;
  border-top: 3px solid #8c8a8c;
  border-bottom: 3px solid #8c8a8c;
  border-right: 3px solid #9a989a;
  background: #aeacae;
}

.layer-table .mode,
.layer-table th:nth-child(7) {
  border-right: none;
}

.layer-table .mode {
  padding-left: 20px;
}

.layer-table td {
  background: #929093;
}

.c-av { width: 158px; }
.c-label { width: 76px; }
.c-num { width: 76px; }
.c-name { width: 302px; }
.c-switches { width: 314px; }
.c-mode { width: 162px; }
.c-t { width: 36px; }
.c-trk { width: 144px; }

.layer-table td:nth-child(7),
.layer-table th:nth-child(7) {
  padding-left: 8px;
}

.layer-table td:nth-child(4) {
  padding-left: 6px;
}

.icons {
  display: flex;
  align-items: center;
  gap: 8px;
}

.icons svg,
.icons i,
.icons em {
  width: 27px;
  height: 28px;
  font-weight: bold;
  line-height: 28px;
}

.icons i {
  background: #9c9a9d;
}

.icons .none {
  background: none;
}

.icons .twirl {
  width: 14px;
  height: 28px;
}

.icons .swatch {
  margin-left: 8px;
  background: #c0383c;
}

.end {
  justify-content: flex-end;
  padding-right: 8px;
}

.layer-name {
  display: flex;
  gap: 8px;
}

.layer-name i {
  width: 32px;
  height: 32px;
  background: #000;
}

.layer-name b {
  flex: 1;
  border: 2px solid #444;
  line-height: 28px;
}

.mode-select {
  width: 132px;
  height: 34px;
  margin-left: 8px;
}

.mode-select .caret {
  border-left: none;
}

.time {
  position: relative;
  flex: 1;
  display: flex;
  flex-direction: column;
  padding-top: 14px;
}

.range {
  display: flex;
  justify-content: space-between;
  border-top: 4px solid #777;
  border-bottom: 4px solid #807e80;
  background: #cdc8cd;
}

.range i {
  width: 19px;
  border-radius: 9px 0 0 9px;
  background: linear-gradient(#8fc4ea, #3d87b8 60%, #1f5470);
}

.range i:last-child {
  border-radius: 0 9px 9px 0;
}

.navigator {
  height: 26px;
}

.ruler {
  display: flex;
  justify-content: space-between;
  height: 41px;
  padding: 2px 19px 0;
  font-size: 20px;
  line-height: 28px;
}

.ruler span {
  display: flex;
  flex-direction: column;
  align-items: center;
  width: 0;
}

.ruler span::after {
  content: "";
  width: 3px;
  height: 11px;
  background: #333;
}

.work-area {
  height: 48px;
  border-bottom: 8px solid #555056;
}

.tracks {
  flex: 1;
  padding: 4px 19px;
  background: #aeacae;
}

.layer-bar {
  height: 34px;
  background: #742c2f;
}

.playhead {
  position: absolute;
  top: 16px;
  bottom: 0;
  left: 17px;
  width: 4px;
  background: #c0403e;
}

.playhead svg {
  width: 36px;
  height: 42px;
  margin: 26px 0 0 -16px;
}

.time-side {
  display: flex;
  flex-direction: column;
  gap: 8px;
  align-items: center;
  width: 38px;
  padding-top: 82px;
}

.time-side > svg {
  height: 38px;
}

.time-side .scroll {
  flex: 1;
}

.timeline-foot {
  display: flex;
  height: 43px;
  border-top: 2px solid #8f8d90;
  background: #a7a5a8;
}

.foot-left {
  display: flex;
  gap: 12px;
  width: 1306px;
  padding-left: 8px;
}

.foot-right {
  flex: 1;
  display: flex;
  align-items: center;
  gap: 14px;
  padding-left: 14px;
}

.foot-right > svg {
  width: 24px;
}

.foot-right .big {
  width: 44px;
  margin-left: 8px;
}

.foot-right input {
  width: 116px;
  height: 20px;
  appearance: none;
}

.foot-right input::-webkit-slider-runnable-track {
  height: 5px;
  background: #8a888a;
}

.foot-right input::-webkit-slider-thumb {
  appearance: none;
  width: 24px;
  height: 18px;
  margin-top: -6px;
  background: #666;
  clip-path: polygon(50% 0, 100% 50%, 100% 100%, 0 100%, 0 50%);
}

.hscroll {
  flex: 1;
  display: flex;
  align-items: center;
  height: 41px;
  margin-right: 38px;
  background: #6c6a6c;
}

.hscroll button {
  height: 40px;
}

.hscroll i {
  flex: 1;
}

/* lower row */
.lower {
  display: grid;
  grid-template-columns: 380px minmax(0, 1fr) 84px 170px;
  column-gap: 8px;
  min-height: 0;
}

.lower .tab-row {
  height: 56px;
}

.project .tab {
  gap: 10px;
  margin-left: 12px;
  padding-left: 10px;
}

.project-body {
  flex: 1;
  display: flex;
  flex-direction: column;
  min-height: 0;
  background: #a7a5a8;
}

.project-info {
  display: flex;
  gap: 10px;
  height: 264px;
  padding: 14px 0 0 12px;
}

.thumb {
  flex: none;
  display: flex;
  flex-direction: column;
  gap: 4px;
  width: 154px;
  height: 150px;
  padding-top: 5px;
  border-top: 3px solid #8a888a;
  border-bottom: 6px solid #5a565a;
}

.thumb i {
  flex: 1;
  background: #fff;
}

.thumb i:last-child {
  flex: none;
  height: 28px;
  border-top: 3px solid #8a888a;
  background: #eae4ea;
}

.info-text {
  display: flex;
  flex-direction: column;
  line-height: 30px;
  white-space: nowrap;
}

.name-head {
  display: flex;
  align-items: center;
  justify-content: space-between;
  height: 48px;
  margin-left: 36px;
  padding: 0 16px 0 12px;
  border-top: 4px solid #55908c;
}

.name-head svg {
  width: 30px;
  height: 18px;
}

.project-list {
  flex: 1;
  display: flex;
  min-height: 0;
  border-top: 3px solid #8a888a;
}

.project-list ul {
  flex: 1;
}

.project-list .scroll > svg {
  width: 34px;
  height: 36px;
}

.project-list li {
  display: flex;
  align-items: center;
  gap: 10px;
  height: 40px;
  padding-left: 38px;
}

.project-list .dim {
  background: #8f8d90;
}

.project-list .picked {
  gap: 9px;
  height: 50px;
  padding-left: 10px;
  background: #c5c0c5;
}

.project-list .picked svg {
  width: 36px;
  height: 32px;
}

.project-list .picked .twirl {
  width: 20px;
}

.project-foot {
  display: flex;
  align-items: center;
  gap: 28px;
  height: 40px;
  margin-right: 38px;
  padding-left: 12px;
  background: #929093;
}

.project-foot svg {
  width: 30px;
  height: 30px;
}

.project-foot i {
  width: 12px;
  height: 38px;
  margin-left: -12px;
  background: #6a686a;
}

/* composition viewer */
.viewer .tab-row {
  height: 54px;
}

.tab-queue {
  height: 32px;
  margin: 0 -12px 4px 22px;
  padding: 0 58px 0 24px;
  background: #9a989b;
}

.tab-active,
.corner-active {
  position: relative;
  z-index: 1;
  height: 44px;
  margin-bottom: -6px;
  padding: 6px 8px 0 6px;
  background: #dcb24c;
  clip-path: polygon(0 8px, 8px 0, calc(100% - 38px) 0, calc(100% - 26px) 8px, 100% 90%, 100% 100%, 0 100%);
}

.tab-inner {
  display: flex;
  align-items: center;
  gap: 8px;
  height: 38px;
  padding: 0 38px 0 10px;
  background: #a9a7aa;
  clip-path: polygon(0 4px, 6px 0, calc(100% - 34px) 0, calc(100% - 24px) 6px, 100% 100%, 0 100%);
}

.tab-inner .pages {
  width: 28px;
  height: 30px;
}

.tab-inner .dropdown {
  width: 300px;
  height: 34px;
}

.tab-inner b {
  padding-left: 10px;
}

.corner-active {
  width: 90px;
  margin-left: auto;
  padding: 6px 6px 0;
  clip-path: polygon(0 90%, 22px 10px, 38px 0, 100% 0, 100% 100%, 0 100%);
}

.corner-active div {
  display: flex;
  justify-content: flex-end;
  gap: 2px;
  height: 38px;
  padding: 3px 8px 0 0;
  background: #a7a5a8;
  clip-path: polygon(0 100%, 22px 8px, 36px 0, 100% 0, 100% 100%);
}

.viewer-body {
  flex: 1;
  display: flex;
  flex-direction: column;
  min-height: 0;
  border: 6px solid #dcb24c;
  background: #a7a5a8;
}

.stage {
  flex: 1;
  width: 100%;
  min-height: 0;
}

.viewer-foot {
  display: flex;
  align-items: center;
  gap: 11px;
  height: 43px;
  padding-left: 6px;
  border-top: 2px solid #949295;
}

.w-zoom { width: 150px; }
.w-res { width: 142px; }
.w-cam { width: 238px; }
.w-view { width: 140px; }

.time-box {
  width: 160px;
  height: 36px;
  border: 2px solid #8a888a;
  border-radius: 4px;
}

.foot-icons {
  display: flex;
  gap: 15px;
  padding: 0 6px;
}

/* docked panels on the right */
.dock {
  display: flex;
  flex-direction: column;
  min-width: 0;
  min-height: 0;
  padding-top: 16px;
}

.dock-wide {
  padding-left: 4px;
}

.pill {
  flex: none;
  width: 72px;
  height: 9px;
  margin: 0 0 5px 8px;
  border-radius: 3px;
  background: #aeacae;
}

.pill.tiny {
  width: 18px;
}

.pill.long {
  width: 92px;
}

.dock-panel {
  flex: none;
  margin-bottom: 19px;
  border-radius: 8px 0 0 0;
  background: #a7a5a8;
  overflow: hidden;
}

.dock-tab {
  display: flex;
  align-items: center;
  justify-content: flex-end;
  height: 42px;
  padding: 0 10px 0 8px;
  background: #b0aeb1;
}

.dock-tab span {
  flex: 1;
  min-width: 0;
  padding-left: 6px;
  overflow: hidden;
}

.dock-tab svg {
  width: 28px;
  height: 30px;
}

.dock-tab .dots {
  width: 14px;
}

.closed {
  height: 41px;
}

.inset {
  margin-left: 12px;
}

.controls {
  height: 400px;
}

.dock-narrow .dock-tab {
  padding-right: 14px;
}

.mini-range {
  height: 26px;
  margin: 186px 4px 0;
  border-top: 4px solid #555;
  border-bottom: 3px solid #555;
  background: linear-gradient(to right, #3d8fc4 14px, #dcd6e0 14px, #dcd6e0 calc(100% - 14px), #3d8fc4 calc(100% - 14px));
}

.mini-track {
  height: 44px;
  margin: 0 4px 4px;
  border-bottom: 8px solid #333;
  background: linear-gradient(to right, #868486 14px, #b4b2b4 14px, #b4b2b4 calc(100% - 14px), #868486 calc(100% - 14px));
}

.mini-row {
  display: flex;
  align-items: center;
  gap: 16px;
  height: 48px;
  padding-left: 12px;
}

.mini-row button {
  width: 36px;
  height: 36px;
  border: 2px solid #929092;
}

.mini-row svg {
  width: 28px;
  height: 28px;
}

.faint {
  color: #8a888a;
}

.character {
  flex: 1;
  margin-bottom: 0;
}

.character input {
  display: block;
  width: 120px;
  height: 40px;
  margin: 20px 0 0 12px;
  padding-left: 8px;
  border: 2px solid #8a888a;
  border-radius: 6px;
  background: #f4f0f4;
}

.character input + input {
  margin-top: 16px;
}

.char-group {
  margin: 12px 0 0 10px;
  padding: 8px 0 0 2px;
  border-top: 3px solid #848284;
}

.char-group.one {
  height: 62px;
}

.char-group div {
  display: flex;
  align-items: center;
  gap: 20px;
  height: 48px;
}

.char-group.one + .char-group {
  margin-top: 10px;
}

.char-group svg {
  width: 36px;
}

.character hr {
  margin: 10px 0 0 10px;
  border: none;
  border-top: 3px solid #848284;
}

.effects {
  height: 604px;
}

.contains {
  display: flex;
  align-items: center;
  justify-content: space-between;
  height: 52px;
  padding: 0 14px 2px 11px;
}

.contains input {
  width: 26px;
  height: 40px;
  background: #f6f2f6;
}

.effects-list {
  display: flex;
  height: 470px;
}

.effects-list ul {
  flex: 1;
  min-width: 0;
  background: #cfc9cf;
  overflow: hidden;
}

.effects-list li {
  display: flex;
  align-items: center;
  gap: 10px;
  height: 40px;
  padding-left: 10px;
  white-space: nowrap;
}

.effects-list li svg {
  width: 16px;
  height: 26px;
}

.dark i {
  padding-top: 6px;
  background: #6e6c6e;
}

.dark i b {
  display: block;
  height: 152px;
  background: #aaa8aa;
}

.effects-foot {
  display: flex;
  justify-content: flex-end;
  height: 40px;
  padding-right: 54px;
  background: linear-gradient(to right, #8f8d90 126px, #a7a5a8 126px);
}

.effects-foot svg {
  width: 28px;
}

.paragraph {
  flex: 1;
  margin-bottom: 0;
}

.aligns {
  display: flex;
  gap: 12px;
  height: 62px;
  margin-left: 10px;
  padding: 12px 0 0 8px;
  border-bottom: 3px solid #848284;
}

.aligns button {
  flex: none;
  width: 40px;
  height: 36px;
}

.aligns .lit {
  width: 56px;
  background: #eeecee;
}

.indent {
  display: flex;
  align-items: center;
  gap: 6px;
  height: 50px;
  padding: 14px 0 0 12px;
}

.indent svg {
  width: 44px;
  height: 28px;
}

.cursor {
  position: absolute;
  top: 166px;
  left: 46px;
  width: 26px;
  height: 42px;
}
```
